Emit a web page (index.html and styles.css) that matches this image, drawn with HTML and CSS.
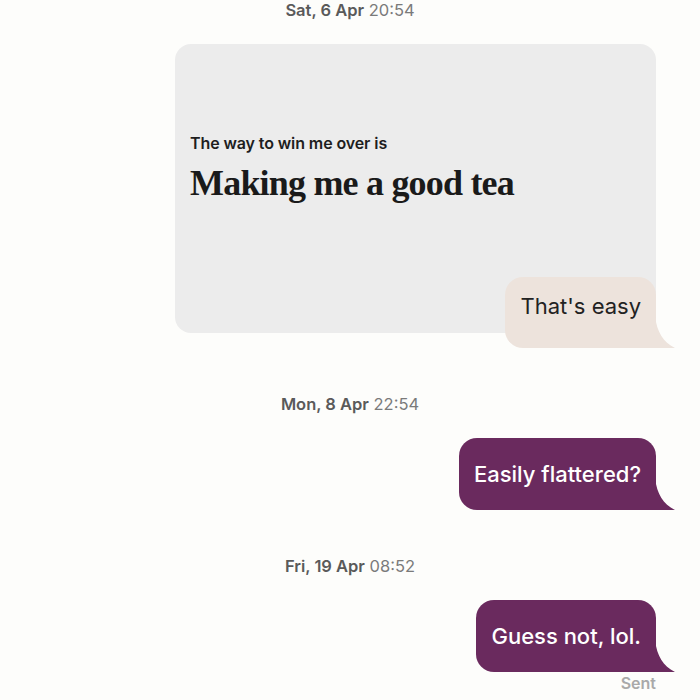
FILE: index.html
```html
<!DOCTYPE html>
<html lang="en">
<head>
    <meta charset="UTF-8">
    <meta name="viewport" content="width=device-width, initial-scale=1.0">
    <title>Chat</title>
    <link rel="stylesheet" href="styles.css">
</head>
<body>
    <div class="thread">
        <div class="stamp stamp-first"><b>Sat, 6 Apr</b> 20:54</div>

        <div class="prompt-card">
            <p class="prompt-question">The way to win me over is</p>
            <p class="prompt-answer">Making me a good tea</p>
        </div>
        <div class="bubble bubble-reply">That's easy</div>

        <div class="stamp"><b>Mon, 8 Apr</b> 22:54</div>
        <div class="bubble bubble-mine">Easily flattered?</div>

        <div class="stamp"><b>Fri, 19 Apr</b> 08:52</div>
        <div class="bubble bubble-mine">Guess not, lol.</div>
        <div class="status">Sent</div>
    </div>
</body>
</html>
```

FILE: styles.css
```css
:root {
    --page-bg: #fdfdfb;
    --card-bg: #ececec;
    --reply-bg: #ede3dc;
    --mine-bg: #6a2a5e;
    --stamp-color: #5a5a5a;
    --time-color: #7a7a7a;
}

body, html {
    margin: 0;
    padding: 0;
    background-color: var(--page-bg);
    font-family: 'Inter', 'Liberation Sans', sans-serif;
    color: #1e1e1e;
    height: 700px;
    overflow: hidden;
}

.thread {
    display: flex;
    flex-direction: column;
    align-items: flex-end;
    padding: 0 44px 0 0;
}

.stamp {
    align-self: stretch;
    padding-left: 44px;
    text-align: center;
    font-size: 16.5px;
    line-height: 22px;
    color: var(--time-color);
    margin: 45px 0 23px;
}

.stamp b {
    color: var(--stamp-color);
    font-weight: 600;
}

.stamp-first {
    margin: -1px 0 23px;
}

.prompt-card {
    width: 481px;
    height: 289px;
    box-sizing: border-box;
    padding: 89px 15px 0;
    background-color: var(--card-bg);
    border-radius: 16px;
}

.prompt-question {
    margin: 0;
    font-size: 16px;
    font-weight: 600;
    line-height: 20px;
    letter-spacing: -0.1px;
}

.prompt-answer {
    margin: 10px 0 0;
    font-family: 'Liberation Serif', serif;
    font-weight: bold;
    font-size: 36px;
    line-height: 40px;
    letter-spacing: -0.8px;
    color: #1a1a1a;
}

.bubble {
    position: relative;
    box-sizing: border-box;
    height: 72px;
    padding: 0 15px;
    display: flex;
    align-items: center;
    font-size: 22px;
    font-weight: 500;
    border-radius: 18px 18px 0 18px;
}

.bubble::after {
    content: '';
    position: absolute;
    right: -19px;
    bottom: 0;
    width: 20px;
    height: 32px;
    background: inherit;
    clip-path: path('M0 0 C2 16 8 26 20 32 L0 32 Z');
}

.bubble-reply {
    margin-top: -56px;
    height: 71px;
    padding: 0 15px 14px;
    font-weight: 400;
    background-color: var(--reply-bg);
    color: #222;
}

.bubble-mine {
    background-color: var(--mine-bg);
    color: #ffffff;
}

.status {
    margin-top: 1px;
    font-size: 16px;
    font-weight: 600;
    color: #a9a9a9;
}
```
